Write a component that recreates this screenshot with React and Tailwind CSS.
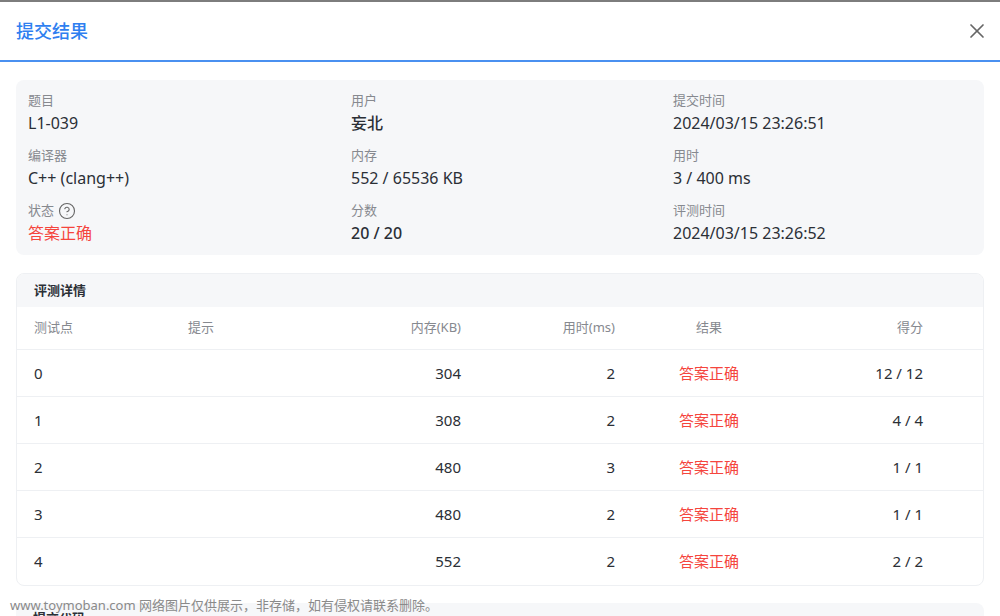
import { CircleHelp, X } from "lucide-react";

// ─── Données ──────────────────────────────────────────────────────────────────
const INFOS = [
  { label: "题目", valeur: "L1-039" },
  { label: "用户", valeur: "妄北", gras: true },
  { label: "提交时间", valeur: "2024/03/15 23:26:51" },
  { label: "编译器", valeur: "C++ (clang++)" },
  { label: "内存", valeur: "552 / 65536 KB" },
  { label: "用时", valeur: "3 / 400 ms" },
  { label: "状态", valeur: "答案正确", aide: true, rouge: true },
  { label: "分数", valeur: "20 / 20", gras: true },
  { label: "评测时间", valeur: "2024/03/15 23:26:52" },
];

const POINTS = [
  { id: 0, mem: 304, temps: 2, score: "12 / 12" },
  { id: 1, mem: 308, temps: 2, score: "4 / 4" },
  { id: 2, mem: 480, temps: 3, score: "1 / 1" },
  { id: 3, mem: 480, temps: 2, score: "1 / 1" },
  { id: 4, mem: 552, temps: 2, score: "2 / 2" },
];

const COLS = "grid grid-cols-[154px_154px_153px_154px_154px_154px_1fr]";

export default function App() {
  return (
    <div
      className="relative h-[616px] w-[1000px] overflow-hidden bg-white"
      style={{ fontFamily: '"Noto Sans", "Noto Sans CJK SC", sans-serif' }}
    >
      {/* Bande du fond (overlay) */}
      <div className="h-[2px] bg-[#7d7d7d]" />

      {/* En-tête */}
      <div className="flex h-[60px] items-center justify-between border-b-2 border-[#4a90f0] pl-4 pr-[11px]">
        <h1 className="text-[18px] font-medium text-[#2f7ff0]">提交结果</h1>
        <X size={24} strokeWidth={1.7} className="text-[#666]" />
      </div>

      <div className="px-4 pt-[18px]">
        {/* Résumé */}
        <div className="grid grid-cols-[323px_322px_1fr] gap-y-[11px] rounded-lg bg-[#f6f7f9] pt-[11px] pb-[10px] pl-3">
          {INFOS.map((i) => (
            <div key={i.label}>
              <div className="flex h-5 items-center gap-[4px] text-[13px] text-[#86898f]">
                {i.label}
                {i.aide && <CircleHelp size={18} strokeWidth={1.5} className="text-[#666]" />}
              </div>
              <div
                className={
                  "flex h-6 items-center text-[16px] " +
                  (i.rouge ? "text-[#f5453d]" : "text-[#2b2f36]") +
                  (i.gras ? " font-medium" : "")
                }
              >
                {i.valeur}
              </div>
            </div>
          ))}
        </div>

        {/* Détails */}
        <div className="mt-[18px] overflow-hidden rounded-lg border border-[#eef0f3]">
          <div className="flex h-[33px] items-center bg-[#f6f7f9] px-[17px] text-[13px] font-semibold text-[#2b2f36]">
            评测详情
          </div>
          <div className={COLS + " h-[43px] items-center border-b border-[#eef0f3] text-[13px] text-[#86898f]"}>
            <div className="pl-[17px]">测试点</div>
            <div className="pl-[17px]">提示</div>
            <div className="pr-[17px] text-right">内存(KB)</div>
            <div className="pr-[17px] text-right">用时(ms)</div>
            <div className="text-center">结果</div>
            <div className="pr-[17px] text-right">得分</div>
          </div>
          {POINTS.map((p, n) => (
            <div
              key={p.id}
              className={
                COLS +
                " h-[47px] items-center text-[15px] text-[#2b2f36]" +
                (n < POINTS.length - 1 ? " border-b border-[#eef0f3]" : "")
              }
            >
              <div className="pl-[17px]">{p.id}</div>
              <div />
              <div className="pr-[17px] text-right">{p.mem}</div>
              <div className="pr-[17px] text-right">{p.temps}</div>
              <div className="text-center text-[#f5453d]">答案正确</div>
              <div className="pr-[17px] text-right">{p.score}</div>
            </div>
          ))}
        </div>

        {/* Code soumis (coupé) */}
        <div className="mt-[17px] h-[40px] rounded-lg bg-[#f6f7f9] px-[17px] pt-[6px] text-[13px] font-semibold text-[#2b2f36]">
          提交代码
        </div>
      </div>

      {/* Filigrane */}
      <div className="absolute bottom-[1px] left-[10px] text-[13px] text-[#8a8a8a]">
        www.toymoban.com 网络图片仅供展示，非存储，如有侵权请联系删除。
      </div>
    </div>
  );
}
